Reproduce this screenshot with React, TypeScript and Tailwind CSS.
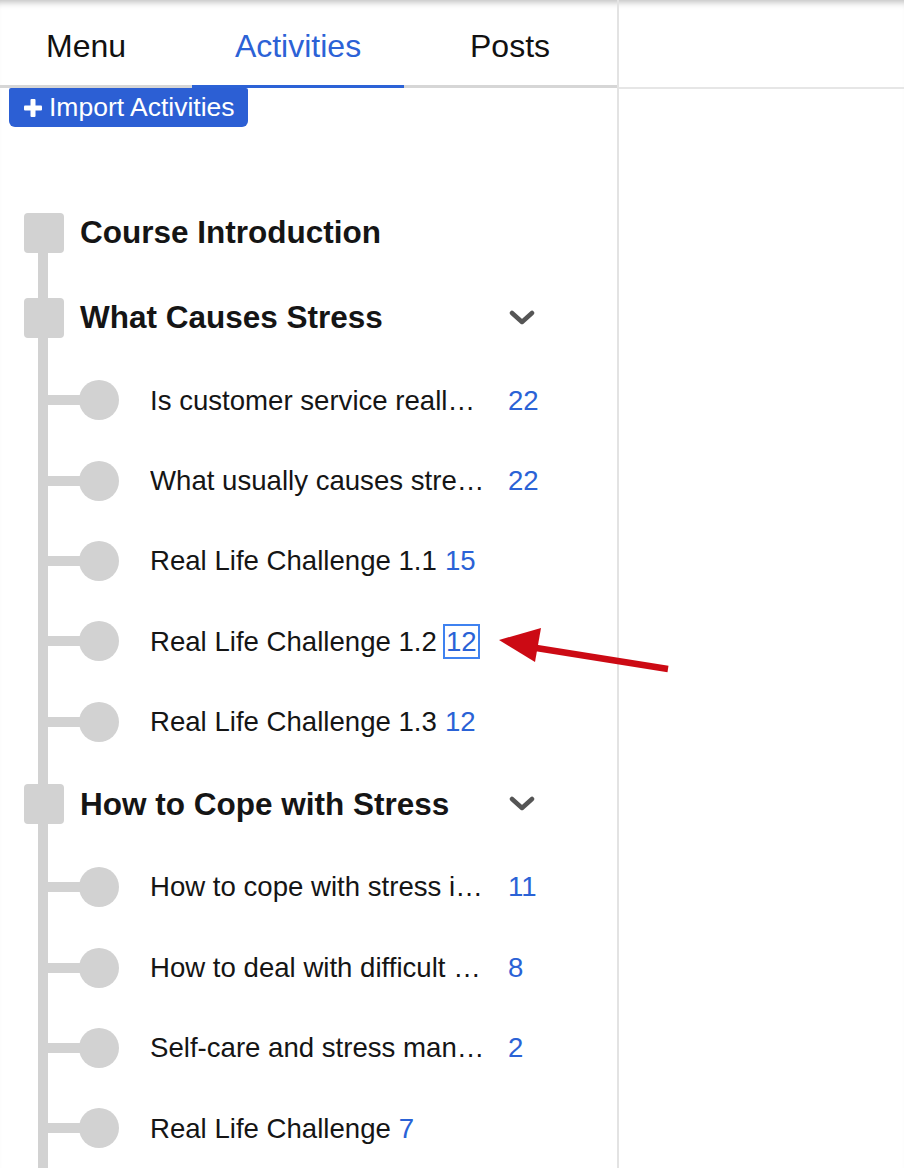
import React from 'react'

type Item = { text: string; count: number; cut?: boolean; marked?: boolean }
type Section = { title: string; chevron: boolean; items: Item[] }

const sections: Section[] = [
  { title: 'Course Introduction', chevron: false, items: [] },
  {
    title: 'What Causes Stress',
    chevron: true,
    items: [
      { text: 'Is customer service reall…', count: 22, cut: true },
      { text: 'What usually causes stre…', count: 22, cut: true },
      { text: 'Real Life Challenge 1.1', count: 15 },
      { text: 'Real Life Challenge 1.2', count: 12, marked: true },
      { text: 'Real Life Challenge 1.3', count: 12 },
    ],
  },
  {
    title: 'How to Cope with Stress',
    chevron: true,
    items: [
      { text: 'How to cope with stress i…', count: 11, cut: true },
      { text: 'How to deal with difficult …', count: 8, cut: true },
      { text: 'Self-care and stress man…', count: 2, cut: true },
      { text: 'Real Life Challenge', count: 7 },
    ],
  },
]

function Chevron() {
  return (
    <svg width="26" height="16" viewBox="0 0 26 16" className="mr-[82px] shrink-0">
      <polyline points="3,3 13,12 23,3" fill="none" stroke="#555" strokeWidth="4.5" strokeLinecap="round" strokeLinejoin="round" />
    </svg>
  )
}

function HeadingRow({ title, chevron, first }: { title: string; chevron: boolean; first: boolean }) {
  return (
    <div className="relative flex items-center h-[85px]">
      <span className={`absolute left-[38px] w-[10px] bg-[#d2d2d2] bottom-0 ${first ? 'top-1/2' : 'top-0'}`} />
      <div className="relative ml-[24px] w-[40px] h-[40px] rounded-[4px] bg-[#d2d2d2] shrink-0" />
      <span className="ml-[16px] flex-1 text-[31.5px] font-bold text-[#151515] whitespace-nowrap">{title}</span>
      {chevron && <Chevron />}
    </div>
  )
}

function ItemRow({ item }: { item: Item }) {
  return (
    <div className="relative flex items-center h-[80.4px]">
      <span className="absolute left-[38px] w-[10px] bg-[#d2d2d2] top-0 bottom-0" />
      <div className="relative ml-[48px] w-[32px] h-[10px] bg-[#d2d2d2] shrink-0" />
      <div className="relative -ml-px w-[40px] h-[40px] rounded-full bg-[#d2d2d2] shrink-0" />
      <div className="ml-[31px] flex items-center text-[27.6px] text-[#151515] whitespace-nowrap">
        <span className={item.cut ? 'inline-block w-[350px] overflow-hidden' : ''}>{item.text}</span>
        {item.marked ? (
          <span className="ml-[6px] inline-block border-2 border-[#3f82f0] px-[1px] leading-[31px] text-[#2a62d6]">{item.count}</span>
        ) : (
          <span className="ml-[8px] text-[#2a62d6]">{item.count}</span>
        )}
      </div>
    </div>
  )
}

const tabs = ['Menu', 'Activities', 'Posts']

export default function App() {
  return (
    <div
      className="relative flex h-[1168px] w-[904px] overflow-hidden bg-white shadow-[inset_0_8px_7px_-6px_rgba(0,0,0,0.28)]"
      style={{ fontFamily: '"Liberation Sans", Arial, sans-serif' }}
    >
      {/* Left panel */}
      <div className="w-[619px] shrink-0 border-r-2 border-[#e3e3e3]">
        {/* Tabs */}
        <div className="-ml-[20px] flex h-[88px] border-b-[3px] border-[#d6d6d6] pt-[6px]">
          {tabs.map((t) => (
            <div
              key={t}
              className={`-mb-[3px] flex w-[212px] shrink-0 items-center justify-center border-b-[3px] text-[32px] ${
                t === 'Activities' ? 'border-[#2c62d6] text-[#2c62d6]' : 'border-transparent text-[#111]'
              }`}
            >
              {t}
            </div>
          ))}
        </div>

        <button className="ml-[9px] flex h-[39px] w-[239px] items-center rounded-b-[6px] rounded-t-[2px] bg-[#2c5fd4] pl-[15px] text-[26.5px] text-white">
          <svg width="18" height="18" viewBox="0 0 18 18" className="shrink-0">
            <rect x="6.5" y="0" width="5" height="18" rx="1" fill="white" />
            <rect x="0" y="6.5" width="18" height="5" rx="1" fill="white" />
          </svg>
          <span className="ml-[7px] leading-none">Import Activities</span>
        </button>

        {/* Tree */}
        <div className="mt-[63px]">
          {sections.map((s, i) => (
            <div key={s.title}>
              <HeadingRow title={s.title} chevron={s.chevron} first={i === 0} />
              {s.items.map((it) => (
                <ItemRow key={it.text} item={it} />
              ))}
            </div>
          ))}
        </div>
      </div>

      {/* Right panel */}
      <div className="flex-1">
        <div className="h-[89px] border-b-2 border-[#e6e6e6]" />
      </div>

      {/* Annotation arrow */}
      <svg className="pointer-events-none absolute left-[490px] top-[620px]" width="190" height="60" viewBox="490 620 190 60">
        <line x1="530" y1="647" x2="668" y2="669" stroke="#cc0a14" strokeWidth="6.5" />
        <polygon points="499,640 541,628 535,662" fill="#cc0a14" />
      </svg>
    </div>
  )
}
